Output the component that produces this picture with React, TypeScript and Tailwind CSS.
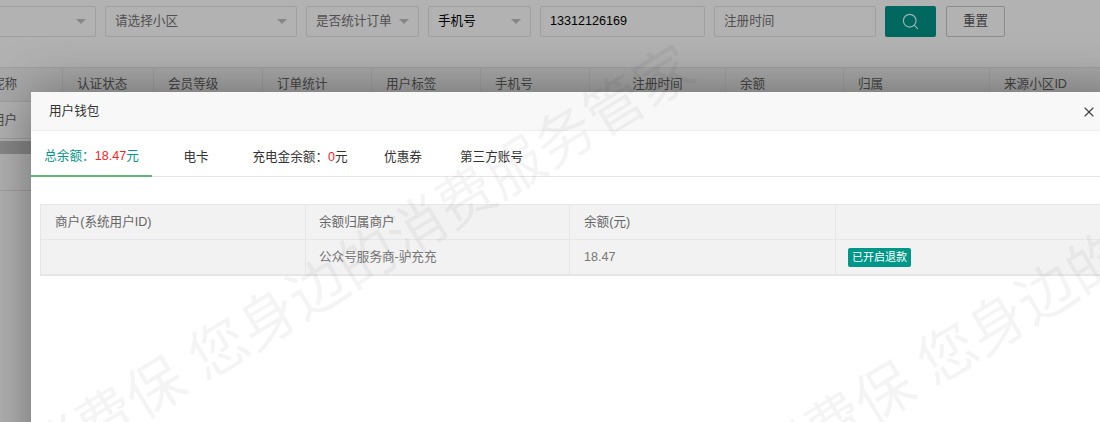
import { Search, X } from "lucide-react";

const columns = [
	{ label: "认证状态", width: "w-[91px] pl-[14px]" },
	{ label: "会员等级", width: "w-[109px] pl-[14px]" },
	{ label: "订单统计", width: "w-[109px] pl-[14px]" },
	{ label: "用户标签", width: "w-[109px] pl-[14px]" },
	{ label: "手机号", width: "w-[109px] pl-[14px]" },
	{ label: "注册时间", width: "w-[136px] justify-center" },
	{ label: "余额", width: "w-[118px] pl-[14px]" },
	{ label: "归属", width: "w-[146px] pl-[14px]" },
	{ label: "来源小区ID", width: "w-[111px] pl-[14px]" },
];

const FONT = "font-['Liberation_Sans','Noto_Sans_CJK_SC',sans-serif]";

function Select({ text, className, selected }: { text: string; className: string; selected?: boolean }) {
	return (
		<div
			className={`flex h-[31px] shrink-0 items-center justify-between rounded-[2px] border border-[#e6e6e6] bg-white pl-[9px] pr-[9px] ${className}`}
		>
			<span className={selected ? "text-black" : "text-[#757575]"}>{text}</span>
			<span className="h-0 w-0 border-x-[5px] border-t-[5px] border-x-transparent border-t-[#c2c2c2]" />
		</div>
	);
}

function Watermark({ className }: { className: string }) {
	return (
		<div
			className={`pointer-events-none absolute origin-left rotate-[-31.5deg] whitespace-nowrap text-[58px] leading-[58px] text-black/[0.045] ${className}`}
		>
			消费保 您身边的消费服务管家
		</div>
	);
}

export default function App() {
	return (
		<div className={`relative h-[422px] w-[1100px] overflow-hidden bg-white text-[12.6px] text-[#666] ${FONT}`}>
			{/* page behind the dialog */}
			<div className="flex gap-[9px] pt-[6px]">
				<Select text="" className="-ml-[69px] w-[165px]" />
				<Select text="请选择小区" className="w-[192px]" />
				<Select text="是否统计订单" className="w-[113px]" />
				<Select text="手机号" selected className="w-[103px]" />
				<div className="flex h-[31px] w-[165px] shrink-0 items-center rounded-[2px] border border-[#e6e6e6] pl-[9px] text-black">
					13312126169
				</div>
				<div className="flex h-[31px] w-[162px] shrink-0 items-center rounded-[2px] border border-[#e6e6e6] pl-[9px] text-[#757575]">
					注册时间
				</div>
				<div className="flex h-[31px] w-[51px] shrink-0 items-center justify-center rounded-[2px] bg-[#009688] text-[#dff]">
					<Search size={19} strokeWidth={1.5} />
				</div>
				<div className="ml-px flex h-[31px] w-[59px] shrink-0 items-center justify-center rounded-[2px] border border-[#c9c9c9] text-[#555]">
					重置
				</div>
			</div>

			<div className="mt-[30px] flex h-[35px] w-[1100px] border-y border-[#e6e6e6] bg-[#f2f2f2]">
				<div className="flex h-full w-[63px] shrink-0 items-center border-r border-[#e6e6e6]">
					<span className="-ml-[8px] whitespace-nowrap">昵称</span>
				</div>
				{columns.map((col) => (
					<div
						key={col.label}
						className={`flex h-full shrink-0 items-center border-r border-[#e6e6e6] ${col.width}`}
					>
						{col.label}
					</div>
				))}
			</div>
			<div className="flex h-[37px] items-center border-b border-[#e6e6e6]">
				<span className="-ml-[8px]">用户</span>
			</div>
			<div className="mt-[2px] h-[13px] bg-[#c2c2c2]" />
			<div className="h-[37px] border-b border-[#e6e6e6]" />

			{/* overlay */}
			<div className="absolute inset-0 bg-black/30" />

			{/* wallet dialog */}
			<div className="absolute left-[31px] top-[92px] h-[400px] w-[1100px] bg-white shadow-[1px_1px_50px_rgba(0,0,0,0.4)]">
				<div className="flex h-[39px] items-center border-b border-[#eee] bg-[#f8f8f8] pl-[18px] text-[#333]">
					用户钱包
					<X size={16} strokeWidth={1.75} className="absolute left-[1050px] top-[12px] text-[#444]" />
				</div>
				<div className="flex h-[46px] border-b border-[#e6e6e6] pt-[7px] text-[#333]">
					<div className="-mb-px -mt-[7px] flex w-[121px] items-center justify-center border-b-2 border-[#5fb878] pt-[7px] text-[#009688]">
						总余额：<span className="text-[#f22]">18.47</span>元
					</div>
					<div className="flex w-[88px] items-center justify-center">电卡</div>
					<div className="flex w-[120px] items-center justify-center">
						充电金余额：<span className="text-[#f22]">0</span>元
					</div>
					<div className="flex w-[86px] items-center justify-center">优惠券</div>
					<div className="flex w-[91px] items-center justify-center">第三方账号</div>
				</div>
				<div className="ml-[9px] mt-[27px] grid grid-cols-[265px_264px_266px_1fr] grid-rows-[35px_34px] border-x border-t border-b-2 border-[#e6e6e6] bg-[#f2f2f2]">
					<div className="flex items-center border-r border-b border-[#e6e6e6] pl-[14px]">商户(系统用户ID)</div>
					<div className="flex items-center border-r border-b border-[#e6e6e6] pl-[13px]">余额归属商户</div>
					<div className="flex items-center border-r border-b border-[#e6e6e6] pl-[14px]">余额(元)</div>
					<div className="border-b border-[#e6e6e6]" />
					<div className="border-r border-[#e6e6e6]" />
					<div className="flex items-center border-r border-[#e6e6e6] pl-[13px] text-[#777]">公众号服务商-驴充充</div>
					<div className="flex items-center border-r border-[#e6e6e6] pl-[14px] text-[#777]">18.47</div>
					<div className="flex items-center pl-[12px]">
						<span className="flex h-[19px] w-[63px] items-center justify-center rounded-[2px] bg-[#009688] text-[11px] text-white">
							已开启退款
						</span>
					</div>
				</div>
			</div>

			<Watermark className="left-[32px] top-[435px]" />
			<Watermark className="left-[761px] top-[440px]" />
		</div>
	);
}
